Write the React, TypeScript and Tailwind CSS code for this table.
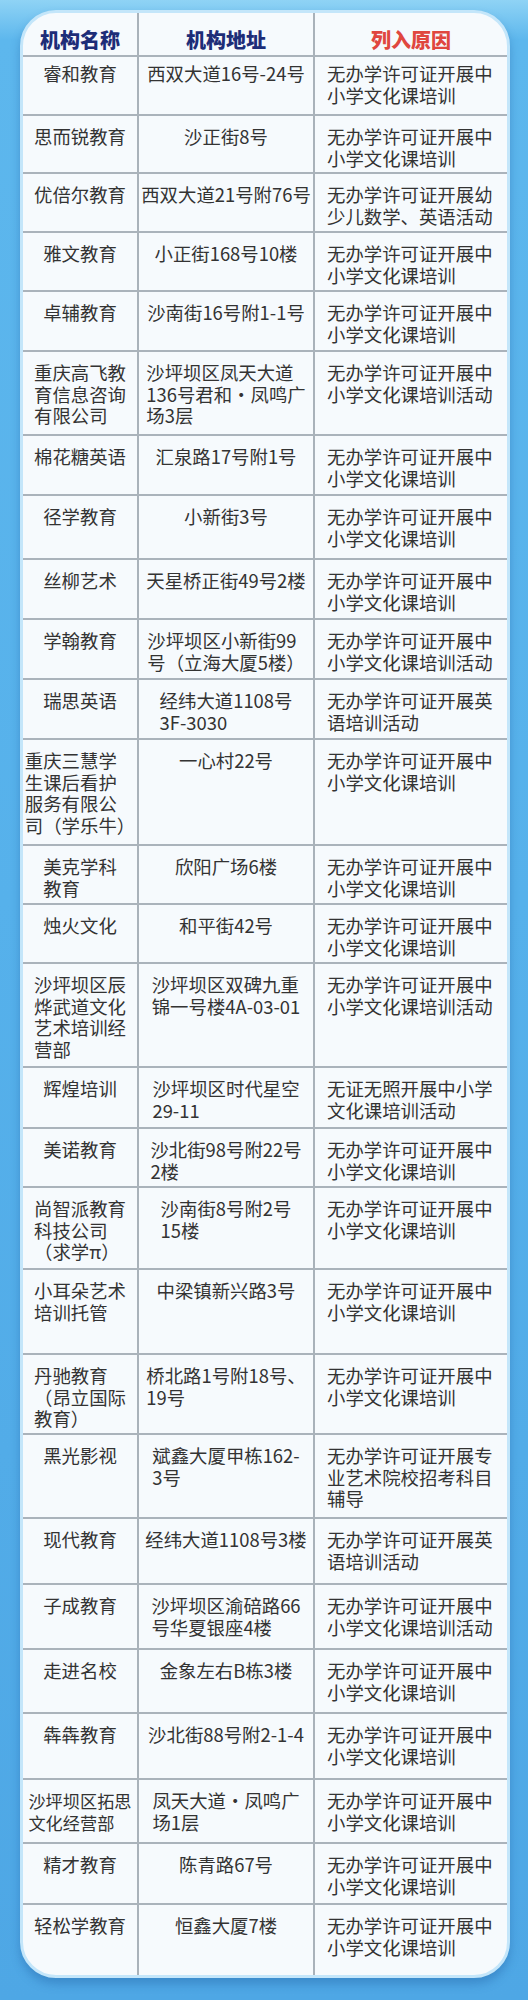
import React from 'react';

type Row = {
  h: string;
  name: string[];
  addr: string[];
  reason: string[];
  small?: boolean;
};

const STD = ['无办学许可证开展中', '小学文化课培训'];
const STD_HD = ['无办学许可证开展中', '小学文化课培训活动'];
const EN = ['无办学许可证开展英', '语培训活动'];

const rows: Row[] = [
  { h: 'h-[59px]', name: ['睿和教育'], addr: ['西双大道16号-24号'], reason: STD },
  { h: 'h-[58px]', name: ['思而锐教育'], addr: ['沙正街8号'], reason: STD },
  { h: 'h-[59px]', name: ['优倍尔教育'], addr: ['西双大道21号附76号'], reason: ['无办学许可证开展幼', '少儿数学、英语活动'] },
  { h: 'h-[59px]', name: ['雅文教育'], addr: ['小正街168号10楼'], reason: STD },
  { h: 'h-[60px]', name: ['卓辅教育'], addr: ['沙南街16号附1-1号'], reason: STD },
  { h: 'h-[84px]', name: ['重庆高飞教', '育信息咨询', '有限公司'], addr: ['沙坪坝区凤天大道', '136号君和·凤鸣广', '场3层'], reason: STD_HD },
  { h: 'h-[60px]', name: ['棉花糖英语'], addr: ['汇泉路17号附1号'], reason: STD },
  { h: 'h-[64px]', name: ['径学教育'], addr: ['小新街3号'], reason: STD },
  { h: 'h-[60px]', name: ['丝柳艺术'], addr: ['天星桥正街49号2楼'], reason: STD },
  { h: 'h-[60px]', name: ['学翰教育'], addr: ['沙坪坝区小新街99', '号（立海大厦5楼）'], reason: STD_HD },
  { h: 'h-[60px]', name: ['瑞思英语'], addr: ['经纬大道1108号', '3F-3030'], reason: EN },
  { h: 'h-[106px]', name: ['重庆三慧学', '生课后看护', '服务有限公', '司（学乐牛）'], addr: ['一心村22号'], reason: STD },
  { h: 'h-[59px]', name: ['美克学科', '教育'], addr: ['欣阳广场6楼'], reason: STD },
  { h: 'h-[59px]', name: ['烛火文化'], addr: ['和平街42号'], reason: STD },
  { h: 'h-[104px]', name: ['沙坪坝区辰', '烨武道文化', '艺术培训经', '营部'], addr: ['沙坪坝区双碑九重', '锦一号楼4A-03-01'], reason: STD_HD },
  { h: 'h-[61px]', name: ['辉煌培训'], addr: ['沙坪坝区时代星空', '29-11'], reason: ['无证无照开展中小学', '文化课培训活动'] },
  { h: 'h-[59px]', name: ['美诺教育'], addr: ['沙北街98号附22号', '2楼'], reason: STD },
  { h: 'h-[82px]', name: ['尚智派教育', '科技公司', '（求学π）'], addr: ['沙南街8号附2号', '15楼'], reason: STD },
  { h: 'h-[85px]', name: ['小耳朵艺术', '培训托管'], addr: ['中梁镇新兴路3号'], reason: STD },
  { h: 'h-[80px]', name: ['丹驰教育', '（昂立国际', '教育）'], addr: ['桥北路1号附18号、', '19号'], reason: STD },
  { h: 'h-[84px]', name: ['黑光影视'], addr: ['斌鑫大厦甲栋162-', '3号'], reason: ['无办学许可证开展专', '业艺术院校招考科目', '辅导'] },
  { h: 'h-[66px]', name: ['现代教育'], addr: ['经纬大道1108号3楼'], reason: EN },
  { h: 'h-[65px]', name: ['子成教育'], addr: ['沙坪坝区渝碚路66', '号华夏银座4楼'], reason: STD_HD },
  { h: 'h-[64px]', name: ['走进名校'], addr: ['金象左右B栋3楼'], reason: STD },
  { h: 'h-[66px]', name: ['犇犇教育'], addr: ['沙北街88号附2-1-4'], reason: STD },
  { h: 'h-[64px]', name: ['沙坪坝区拓思', '文化经营部'], addr: ['凤天大道·凤鸣广', '场1层'], reason: STD, small: true },
  { h: 'h-[61px]', name: ['精才教育'], addr: ['陈青路67号'], reason: STD },
  { h: 'h-[72px]', name: ['轻松学教育'], addr: ['恒鑫大厦7楼'], reason: STD },
];

const Lines = ({ lines, className = '' }: { lines: string[]; className?: string }) => (
  <div className={`whitespace-nowrap text-left ${className}`}>
    {lines.map((l, i) => (
      <div key={i}>{l}</div>
    ))}
  </div>
);

export default function App() {
  return (
    <div className="h-[2000px] bg-[linear-gradient(180deg,#8fd3f5_0px,#5db7ed_40px,#56b1eb_900px,#4ea7e5_2000px)] pt-[10px] font-['Noto_Sans_CJK_SC','Noto_Sans',sans-serif]">
      <div className="ml-[20px] w-[490px] overflow-hidden rounded-[36px] border-[3px] border-[#c4e6fa] bg-[#f6fafd] shadow-[0_6px_10px_rgba(25,85,155,0.35)]">
        {/* header */}
        <div className="flex h-[42px] text-[20px] leading-[20px] font-black">
          <div className="flex w-[114px] justify-center pt-[17px] text-[#1d2d78]">机构名称</div>
          <div className="flex w-[176px] justify-center border-l-2 border-[#a9b2ba] pt-[17px] text-[#1d2d78]">机构地址</div>
          <div className="flex flex-1 justify-center border-l-2 border-[#a9b2ba] pt-[17px] text-[#e0473f]">列入原因</div>
        </div>

        {rows.map((r, i) => (
          <div
            key={i}
            className={`flex border-t-2 border-[#aab3bb] text-[18.4px] leading-[21.5px] text-[#333333] ${r.h}`}
          >
            <div className={`flex w-[114px] justify-center ${i === 0 ? 'pt-[6px]' : 'pt-[10px]'}`}>
              <Lines lines={r.name} className={r.small ? 'text-[17.2px]' : ''} />
            </div>
            <div className={`flex w-[176px] justify-center border-l-2 border-[#a9b2ba] ${i === 0 ? 'pt-[6px]' : 'pt-[10px]'}`}>
              <Lines lines={r.addr} />
            </div>
            <div className={`flex flex-1 justify-start border-l-2 border-[#a9b2ba] pl-[12px] ${i === 0 ? 'pt-[6px]' : 'pt-[10px]'}`}>
              <Lines lines={r.reason} />
            </div>
          </div>
        ))}
      </div>
    </div>
  );
}
